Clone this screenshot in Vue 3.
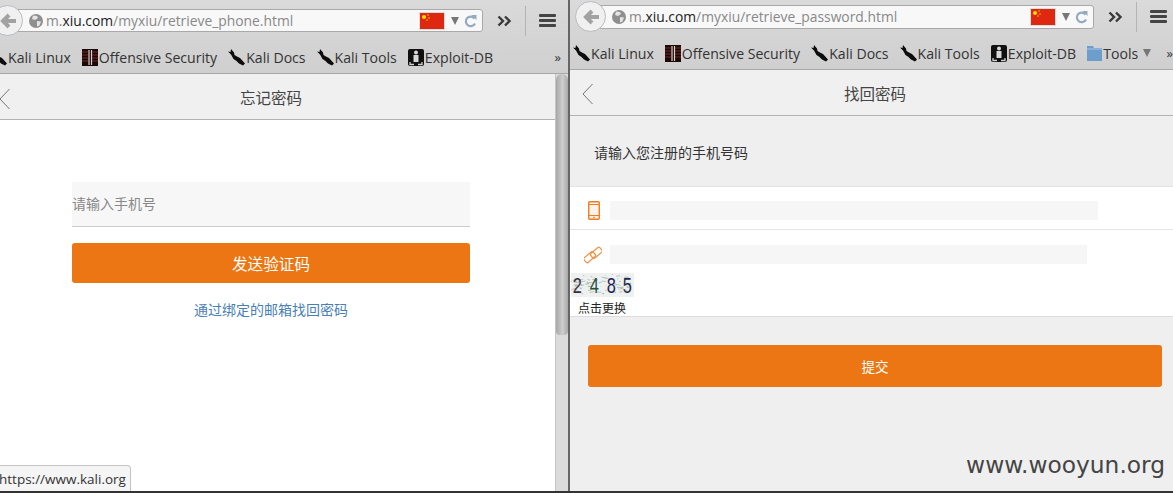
<script setup>
const leftBm = [
  { icon: 'dragon', label: 'Kali Linux' },
  { icon: 'offsec', label: 'Offensive Security' },
  { icon: 'dragon', label: 'Kali Docs' },
  { icon: 'dragon', label: 'Kali Tools' },
  { icon: 'exploit', label: 'Exploit-DB' },
]
const rightBm = [...leftBm, { icon: 'folder', label: 'Tools' }]
const windows = [
  { id: 'lw', path: '/myxiu/retrieve_phone.html', marks: leftBm },
  { id: 'rw', path: '/myxiu/retrieve_password.html', marks: rightBm },
]
let seed = 7
const rnd = (n) => { seed = (seed * 73 + 41) % 1009; return (seed / 1009) * n }
const noise = Array.from({ length: 90 }, () => {
  const x = rnd(57), y = 2 + rnd(19)
  return `M${x.toFixed(1)} ${y.toFixed(1)}l${rnd(5).toFixed(1)} ${(rnd(2) - 1).toFixed(1)}`
}).join('')
</script>

<template>
  <div class="desktop">
    <section v-for="w in windows" :key="w.id" class="win" :class="w.id">
      <header class="chrome">
        <div class="urlrow">
          <div class="backbtn"><svg width="20" height="20" viewBox="0 0 20 20"><path d="M18 10H6M11 4l-6 6 6 6" fill="none" stroke="#a2a2a2" stroke-width="4"/></svg></div>
          <div class="urlbar">
            <svg class="globe" width="14" height="14" viewBox="0 0 14 14"><circle cx="7" cy="7" r="7" fill="#8f8f8f"/><path d="M4 1.500l4 .5 1 2-3 2-3-1zM8 7l4 .5-1.500 4-2.500 1z" fill="#e4e4e4"/></svg>
            <span class="url"><i>m.</i><b>xiu.com</b><i>{{ w.path }}</i></span>
            <span class="flag"><svg width="24" height="16" viewBox="0 0 24 16"><rect width="24" height="16" fill="#de2910"/><circle cx="4" cy="4" r="2" fill="#ffde00"/><circle cx="8" cy="2" r=".7" fill="#ffde00"/><circle cx="9" cy="5" r=".7" fill="#ffde00"/><circle cx="7" cy="7" r=".7" fill="#ffde00"/></svg></span>
            <span class="drop"></span>
            <svg class="reload" width="13" height="14" viewBox="0 0 13 14"><path d="M10.500 4.500A4.800 4.800 0 1 0 11 9.500" fill="none" stroke="#93a9bf" stroke-width="2.200"/><path d="M7.500 1H12.500V6z" fill="#93a9bf"/></svg>
          </div>
          <span class="more"><svg width="15" height="12" viewBox="0 0 15 12"><path d="M1.500 1.500L6 6l-4.500 4.500M8 1.500L12.500 6 8 10.500" fill="none" stroke="#3a3a3a" stroke-width="2.400"/></svg></span>
          <span class="sep"></span>
          <span class="burger"><i></i><i></i><i></i></span>
        </div>
        <nav class="bookmarks">
          <span v-for="b in w.marks" :key="b.label" class="bm">
            <svg v-if="b.icon === 'dragon'" width="17" height="17" viewBox="0 0 17 17"><path d="M0 2.500L2.500 3 3 0l3 3.500.5 2.500L9 7.500l3 1.500 5 5.500-2 2-4-2-2.500-2.500L5.500 10 3 5.500z" fill="#0c0c0c"/></svg>
            <svg v-else-if="b.icon === 'offsec'" width="16" height="17" viewBox="0 0 16 17"><rect width="16" height="17" fill="#1d0808"/><path d="M0 3h6M0 6h6M0 9h6M0 12h6M10 3h6M10 6h6M10 9h6M10 12h6" stroke="#6e2a2a"/><path d="M7 1v15M9.500 1v15" stroke="#d8d0c8" stroke-width="1.200"/></svg>
            <svg v-else-if="b.icon === 'folder'" width="15" height="15" viewBox="0 0 15 15"><path d="M0 0h6l1 2h8v13H0z" fill="#6d9dcb"/><path d="M0 3h15" stroke="#a9c6e2"/></svg>
            <svg v-else width="16" height="17" viewBox="0 0 16 17"><rect width="16" height="17" rx="2" fill="#101010"/><circle cx="8" cy="3.500" r="2" fill="#d8d8d8"/><rect x="5.500" y="6" width="5" height="7" fill="#d8d8d8"/><path d="M2 13v2.500h4M14 13v2.500h-4" fill="none" stroke="#cfcfcf" stroke-width="1.300"/></svg>
            {{ b.label }}<span v-if="b.icon === 'folder'" class="fdrop"></span>
          </span>
          <span class="bmore">»</span>
        </nav>
      </header>

      <div v-if="w.id === 'lw'" class="viewport">
        <main class="page">
          <div class="nav">
            <svg class="chev" width="12" height="22" viewBox="0 0 12 22"><path d="M10.500 1L1 11l9.500 10" fill="none" stroke="#777"/></svg>
            <span class="title">忘记密码</span>
          </div>
          <div class="form">
            <div class="phone">请输入手机号</div>
            <button class="send">发送验证码</button>
            <a class="link">通过绑定的邮箱找回密码</a>
          </div>
          <div class="tip">https://www.kali.org</div>
        </main>
        <aside class="scroll"><div class="thumb"></div></aside>
      </div>

      <main v-else class="page pr">
        <div class="nav">
          <svg class="chev" width="12" height="22" viewBox="0 0 12 22"><path d="M10.500 1L1 11l9.500 10" fill="none" stroke="#777"/></svg>
          <span class="title">找回密码</span>
        </div>
        <p class="hint">请输入您注册的手机号码</p>
        <div class="panel">
          <div class="row r1">
            <svg class="ico" width="12" height="19" viewBox="0 0 12 19"><rect x=".75" y=".75" width="10.500" height="17.500" rx="1" fill="#fdf3ea" stroke="#ee7d22" stroke-width="1.400"/><path d="M1 3.500h10M1 14.500h10" stroke="#ee7d22"/><circle cx="6" cy="16.400" r=".8" fill="#ee7d22"/></svg>
            <div class="field f1"></div>
          </div>
          <div class="row r2">
            <svg class="ico" width="18" height="18" viewBox="0 0 18 18"><g fill="none" stroke="#f0954a" stroke-width="1.300" transform="rotate(-40 9 9)"><rect x="-1" y="5.500" width="12" height="6" rx="1.500"/><rect x="7" y="6.500" width="12" height="6" rx="1.500"/></g></svg>
            <div class="field f2"></div>
          </div>
          <div class="captcha">
            <div class="code">
              <svg class="noise" width="63" height="24" viewBox="0 0 63 24"><path :d="noise" fill="none" stroke="#aab7b1" stroke-width=".8"/></svg>
              <span class="d1">2</span><span class="d2">4</span><span class="d3">8</span><span class="d4">5</span>
            </div>
            <div class="change">点击更换</div>
          </div>
        </div>
        <button class="submit">提交</button>
        <div class="mark">www.wooyun.org</div>
      </main>
    </section>
  </div>
</template>

<style>
html, body { margin: 0; padding: 0; background: #efefef; overflow: hidden; }
</style>

<style scoped>
.desktop { display: flex; width: 1173px; height: 493px; overflow: hidden; font-family: "Open Sans", "Noto Sans CJK SC", sans-serif; border-bottom: 2px solid #333; box-sizing: border-box; }
.win { display: flex; flex-direction: column; height: 491px; overflow: hidden; box-sizing: border-box; }
.lw { width: 570px; flex: none; border-right: 2px solid #666; }
.rw { flex: 1; min-width: 0; }

.chrome { background: linear-gradient(#dadada, #cfcfcf); border-bottom: 1px solid #a8a8a8; flex: none; box-sizing: border-box; }
.lw .chrome { height: 74px; padding-top: 5px; }
.rw .chrome { height: 70px; padding-top: 1px; }
.urlrow { display: flex; align-items: center; height: 31px; }
.lw .urlrow { margin-left: -8px; }
.rw .urlrow { margin-left: 5px; }
.backbtn { width: 31px; height: 31px; border-radius: 50%; background: #f0f0f0; border: 1px solid #b8bcc0; box-sizing: border-box; display: flex; align-items: center; justify-content: center; z-index: 1; flex: none; }
.urlbar { display: flex; align-items: center; background: #f8f8f8; border: 1px solid #a9a9a9; border-radius: 0 3px 3px 0; margin-left: -6px; padding-left: 11px; box-sizing: border-box; flex: none; }
.lw .urlbar { width: 466px; height: 23px; }
.rw .urlbar { width: 494px; height: 24px; }
.globe { margin-right: 3px; flex: none; }
.url { font-size: 13.850px; flex: 1; white-space: nowrap; }
.url i { font-style: normal; color: #888; }
.url b { font-weight: 400; color: #222; }
.flag { flex: none; display: flex; border: 1px solid #ddd; }
.drop { width: 0; height: 0; border-left: 4px solid transparent; border-right: 4px solid transparent; border-top: 8px solid #777; margin: 0 5px 0 6px; flex: none; }
.reload { flex: none; margin-right: 5px; }
.more { width: 42px; display: flex; justify-content: center; flex: none; }
.sep { width: 1px; height: 30px; background: #b4b4b4; flex: none; }
.burger { display: flex; flex-direction: column; gap: 2px; margin-left: 13px; flex: none; }
.burger i { width: 17px; height: 3px; background: #444; border-radius: 1px; display: block; }
.bookmarks { display: flex; align-items: center; color: #333; font-size: 14.100px; white-space: nowrap; height: 32px; position: relative; }
.lw .bookmarks { margin: 5px 0 0 -10px; gap: 11px; }
.rw .bookmarks { margin: 5px 0 0 3px; gap: 11px; }
.bm { display: flex; align-items: center; gap: 1px; flex: none; }
.bm svg { flex: none; }
.fdrop { width: 0; height: 0; border-left: 4px solid transparent; border-right: 4px solid transparent; border-top: 8px solid #777; margin-left: 4px; }
.bmore { position: absolute; font-size: 13px; }
.lw .bmore { right: 7px; }
.rw .bmore { right: 0; }

.viewport { flex: 1; display: flex; min-height: 0; }
.page { flex: 1; position: relative; background: #fff; min-width: 0; }
.scroll { width: 13px; background: #dcdcdc; flex: none; border-left: 1px solid #c4c4c4; box-sizing: border-box; }
.thumb { height: 261px; background: linear-gradient(90deg, #a8a8a8, #cdcdcd 55%, #a8a8a8); border-radius: 6px 6px 4px 4px; }

.nav { display: flex; align-items: center; justify-content: center; background: #f0f0f0; border-bottom: 1px solid #b3b3b3; color: #444; font-size: 15.500px; position: relative; box-sizing: border-box; height: 46px; }
.title { padding-top: 2px; }
.lw .nav { padding-right: 13px; }
.rw .nav { padding-left: 7px; }
.chev { position: absolute; }
.lw .chev { left: -1px; top: 14px; }
.rw .chev { left: 12px; top: 13px; }
.form { display: flex; flex-direction: column; width: 398px; margin: 62px 0 0 72px; }
.phone { height: 45px; line-height: 44px; background: #f7f7f7; border-bottom: 1px solid #ccc; box-sizing: border-box; color: #888; font-size: 14px; }
.send { height: 40px; margin-top: 16px; background: #ec7613; color: #fff; border: 0; border-radius: 3px; font: inherit; font-size: 15.600px; }
.link { color: #4a7fb5; font-size: 14px; text-align: center; margin-top: 16px; }
.tip { position: absolute; left: -9px; bottom: 0; height: 25px; line-height: 26px; padding: 0 4px 0 7px; border: 1px solid #c4c4c4; border-bottom: 0; border-radius: 0 4px 0 0; background: #f5f5f5; color: #333; font-size: 13.500px; }

.pr { background: #efefef; }
.hint { margin: 0; height: 70px; line-height: 74px; padding-left: 24px; color: #333; font-size: 14px; box-sizing: border-box; }
.panel { background: #fff; border-top: 1px solid #e4e4e4; border-bottom: 1px solid #ddd; }
.row { display: flex; align-items: center; box-sizing: border-box; }
.r1 { height: 43px; border-bottom: 1px solid #e4e4e4; padding: 4px 0 0 18px; }
.r2 { height: 43px; padding: 6px 0 0 14px; }
.r1 .ico { margin-right: 10px; }
.r2 .ico { margin-right: 8px; }
.field { height: 19px; background: #f6f6f6; }
.f1 { width: 488px; }
.f2 { width: 477px; }
.captcha { margin-left: 1px; height: 43px; }
.code { position: relative; width: 63px; height: 24px; line-height: 24px; display: flex; gap: 4px; box-sizing: border-box; background: #eef1ef; font-family: "Liberation Sans", sans-serif; font-size: 21px; }
.noise { position: absolute; left: 0; top: 0; }
.code span { position: relative; width: 13px; text-align: center; display: block; transform: scale(.78, 1.08); }
.d1 { color: #3a2f3f; }
.d2 { color: #24503f; }
.d3 { color: #1c1f5a; }
.d4 { color: #1f2a4f; }
.change { font-size: 12px; color: #222; margin: 4px 0 0 7px; line-height: 16px; }
.submit { display: block; width: 574px; height: 42px; margin: 28px 0 0 18px; background: #ec7613; color: #fff; border: 0; border-radius: 3px; font: inherit; font-size: 13.500px; }
.mark { position: absolute; right: 8px; bottom: 11px; color: #444; font-size: 23.300px; font-family: "DejaVu Sans", sans-serif; line-height: 30px; }
</style>
